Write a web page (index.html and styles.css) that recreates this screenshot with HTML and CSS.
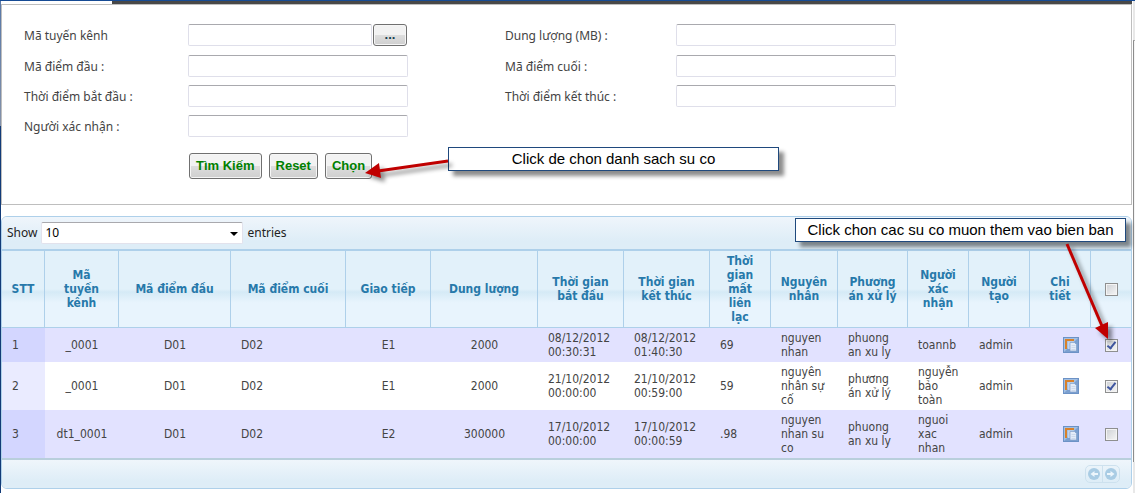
FILE: index.html
```html
<!DOCTYPE html>
<html lang="vi">
<head>
<meta charset="utf-8">
<title>Danh sách sự cố</title>
<link rel="stylesheet" href="styles.css">
</head>
<body>
<svg class="defs" aria-hidden="true">
  <symbol id="copy" viewBox="0 0 16 16">
    <rect x=".5" y=".5" width="15" height="15" fill="#7ba0d0" stroke="#6c92c6"/>
    <path d="M1 1h14L1 15z" fill="#a3c0e3"/>
    <path d="M3 12V3h8" fill="none" stroke="#d8812a" stroke-width="2"/>
    <path d="M5 4.500h5.500V12H5z" fill="#c3d5ec"/>
    <path d="M7 5.500h4.500l2 2V14H7z" fill="#e3ecf8" stroke="#7f9fca" stroke-width=".7"/>
    <path d="M8.500 8.500h4M8.500 10.500h4M8.500 12.500h4" stroke="#bccde4" stroke-width=".6"/>
  </symbol>
</svg>
<div class="window">
  <main class="content">
    <div class="tabbar"></div>
    <form class="panel">
      <div class="fields">
        <label for="route">Mã tuyến kênh</label>
        <div class="picker"><input class="box" id="route" type="text"><button class="btn more" type="button">...</button></div>
        <label for="size">Dung lượng (MB) :</label>
        <input class="box" id="size" type="text">
        <label for="first">Mã điểm đầu :</label>
        <input class="box" id="first" type="text">
        <label for="last">Mã điểm cuối :</label>
        <input class="box" id="last" type="text">
        <label for="start">Thời điểm bắt đầu :</label>
        <input class="box" id="start" type="text">
        <label for="end">Thời điểm kết thúc :</label>
        <input class="box" id="end" type="text">
        <label for="person">Người xác nhận :</label>
        <input class="box" id="person" type="text">
      </div>
      <div class="actions">
        <button class="btn" type="button">Tìm Kiếm</button>
        <button class="btn" type="button">Reset</button>
        <button class="btn" type="button">Chọn</button>
      </div>
    </form>

    <section class="grid">
      <div class="toolbar">
        <label for="count">Show</label>
        <span class="drop"><select id="count"><option>10</option><option>25</option></select></span>
        <span>entries</span>
      </div>
      <table>
        <colgroup>
          <col class="w43"><col class="w74"><col class="w112"><col class="w115"><col class="w85"><col class="w107"><col class="w86"><col class="w86"><col class="w61"><col class="w67"><col class="w70"><col class="w61"><col class="w61"><col class="w61"><col class="w41">
        </colgroup>
        <thead>
          <tr><th>STT</th><th>Mã<br>tuyến<br>kênh</th><th>Mã điểm đầu</th><th>Mã điểm cuối</th><th>Giao tiếp</th><th>Dung lượng</th><th>Thời gian<br>bắt đầu</th><th>Thời gian<br>kết thúc</th><th>Thời<br>gian<br>mất<br>liên<br>lạc</th><th>Nguyên<br>nhân</th><th>Phương<br>án xử lý</th><th>Người<br>xác<br>nhận</th><th>Người<br>tạo</th><th>Chi<br>tiết</th><th><input type="checkbox" aria-label="Chọn tất cả"></th></tr>
        </thead>
        <tbody>
          <tr><td>1</td><td class="mid">_0001</td><td class="mid">D01</td><td>D02</td><td class="mid">E1</td><td class="mid">2000</td><td>08/12/2012<br>00:30:31</td><td>08/12/2012<br>01:40:30</td><td>69</td><td>nguyen<br>nhan</td><td>phuong<br>an xu ly</td><td>toannb</td><td>admin</td><td class="detail"><button type="button" aria-label="Chi tiết"><svg><use href="#copy"/></svg></button></td><td class="tick"><input type="checkbox" aria-label="Chọn dòng 1" checked></td></tr>
          <tr><td>2</td><td class="mid">_0001</td><td class="mid">D01</td><td>D02</td><td class="mid">E1</td><td class="mid">2000</td><td>21/10/2012<br>00:00:00</td><td>21/10/2012<br>00:59:00</td><td>59</td><td>nguyên<br>nhân sự<br>cố</td><td>phương<br>án xử lý</td><td>nguyễn<br>bảo<br>toàn</td><td>admin</td><td class="detail"><button type="button" aria-label="Chi tiết"><svg><use href="#copy"/></svg></button></td><td class="tick"><input type="checkbox" aria-label="Chọn dòng 2" checked></td></tr>
          <tr><td>3</td><td class="mid">dt1_0001</td><td class="mid">D01</td><td>D02</td><td class="mid">E2</td><td class="mid">300000</td><td>17/10/2012<br>00:00:00</td><td>17/10/2012<br>00:00:59</td><td>.98</td><td>nguyen<br>nhan su<br>co</td><td>phuong<br>an xu ly</td><td>nguoi<br>xac<br>nhan</td><td>admin</td><td class="detail"><button type="button" aria-label="Chi tiết"><svg><use href="#copy"/></svg></button></td><td class="tick"><input type="checkbox" aria-label="Chọn dòng 3"></td></tr>
        </tbody>
      </table>
      <div class="footer">
        <div class="pager">
          <button type="button" aria-label="Trang trước"><svg viewBox="0 0 16 16"><circle cx="8" cy="8" r="6" fill="#a9cce4"/><path d="M12 7v2H8.500v2L4.500 8l4-3v2z" fill="#edf6fc"/></svg></button>
          <button type="button" aria-label="Trang sau"><svg viewBox="0 0 16 16"><circle cx="8" cy="8" r="6" fill="#a9cce4"/><path d="M4 7v2h3.500v2l4-3-4-3v2z" fill="#edf6fc"/></svg></button>
        </div>
      </div>
    </section>
  </main>
  <div class="scroll"><div class="thumb"></div></div>
</div>
<div class="note note-search">Click de chon danh sach su co</div>
<div class="note note-rows">Click chon cac su co muon them vao bien ban</div>
<svg class="arrows" width="1135" height="493" aria-hidden="true">
  <g class="arrow"><path d="M448 161L378 171" stroke="#c00000" stroke-width="3"/><path d="M365 173L379 163L381 178z" fill="#c00000"/></g>
  <g class="arrow"><path d="M1067 244L1102 326" stroke="#c00000" stroke-width="3"/><path d="M1108 339L1095 328L1108 322z" fill="#c00000"/></g>
</svg>
</body>
</html>
```

FILE: styles.css
```css
* { box-sizing: border-box; }
body {
  margin: 0;
  position: relative;
  background: #fff;
  color: #444;
  font: 12px/14px "Noto Sans", "DejaVu Sans", sans-serif;
}
.defs { position: absolute; width: 0; height: 0; }
.window {
  display: flex;
  min-height: 100vh;
  border-top: 1px solid #164b94;
  background: linear-gradient(#5878a8, #8492aa 125px, #123b78 125px) left / 1px 100% no-repeat;
  padding-left: 1px;
}
.content { flex: 1; min-width: 0; padding-right: 1px; }
.tabbar { height: 3px; margin-left: 111px; background: #484848; }
.panel {
  border: 1px solid #bebebe;
  padding: 19px 22px 25px;
}
.fields {
  display: grid;
  grid-template-columns: 164px 317px 171px 220px;
  grid-template-rows: 23px;
  row-gap: 8px;
}
.fields label { padding-top: 5px; }
.box {
  width: 220px;
  height: 22px;
  padding: 2px 4px;
  border: 1px solid #dfdfea;
  border-top-color: #a9a9ae;
  border-radius: 2px;
  background: #fff;
  font: inherit;
}
.picker { display: flex; gap: 1px; }
.picker .box { width: 184px; }
.btn {
  height: 26px;
  padding: 0 6px;
  border: 1px solid #707070;
  border-radius: 3px;
  box-shadow: inset 0 0 0 1px #f6f6f6;
  background: linear-gradient(#f2f2f2 0 48%, #dedede 48%, #cfcfcf);
  color: #008000;
  font: bold 13px/18px "Liberation Sans", Arial, sans-serif;
}
.more { width: 34px; height: 22px; color: #164050; }
.actions { display: flex; gap: 7px; margin: 16px 0 0 165px; }
.grid {
  margin-top: 11px;
  border: 1px solid #aed0ea;
  border-radius: 6px;
  overflow: hidden;
}
.toolbar {
  display: flex;
  align-items: center;
  gap: 4px;
  height: 34px;
  padding: 0 5px;
  border-bottom: 2px solid #aed0ea;
  background: linear-gradient(#eff5fb, #deedf7 75%);
  color: #222;
}
.drop { position: relative; width: 202px; }
.drop::after {
  content: "";
  position: absolute;
  right: 5px;
  top: 10px;
  border: 4px solid transparent;
  border-top-color: #000;
  border-bottom: 0;
}
.drop select {
  display: block;
  width: 100%;
  height: 22px;
  padding: 0 3px;
  appearance: none;
  border: 1px solid #e2e2ec;
  border-top-color: #a9a9ae;
  border-radius: 2px;
  background: #fff;
  color: #000;
  font: inherit;
}
table {
  width: 100%;
  table-layout: fixed;
  border-collapse: separate;
  border-spacing: 0;
  font-family: "DejaVu Sans Condensed", "DejaVu Sans", sans-serif;
}
.w41 { width: 41px; } .w43 { width: 43px; } .w61 { width: 61px; }
.w67 { width: 67px; } .w70 { width: 70px; } .w74 { width: 74px; }
.w85 { width: 85px; } .w86 { width: 86px; } .w107 { width: 107px; }
.w112 { width: 112px; } .w115 { width: 115px; }
th {
  padding: 3px 0;
  border-right: 1px solid #aed0ea;
  border-bottom: 1px solid #aed0ea;
  background: linear-gradient(#e2f1fa 0 50%, #d5eaf6 54%, #e8f4fd 68%);
  color: #2779aa;
  font-weight: bold;
  white-space: nowrap;
}
th:last-child { border-right: 0; }
td { padding: 3px 0 3px 10px; white-space: nowrap; }
tbody tr { background: #e2e2ff; }
tbody tr:nth-child(even) { background: #fff; }
td:first-child { background: #d3d6ff; }
tr:nth-child(even) td:first-child { background: #eaebff; }
.mid { padding: 3px 0; text-align: center; }
.tick { padding: 3px 0; text-align: center; }
.detail { padding: 3px 0 3px 33px; }
td button, .pager button { display: block; padding: 0; border: 0; background: none; }
td button { width: 16px; height: 16px; }
svg { display: block; width: 16px; height: 16px; }
input[type="checkbox"] {
  display: block;
  position: relative;
  width: 13px;
  height: 13px;
  margin: 0 auto;
  appearance: none;
  border: 1px solid #8e8f8f;
  background: linear-gradient(135deg, #cdd0d4, #f6f6f6);
  box-shadow: inset 0 0 0 1px #f4f4f4;
}
input[type="checkbox"]:checked::after {
  content: "";
  position: absolute;
  box-sizing: border-box;
  left: 3px;
  top: 0;
  width: 5px;
  height: 9px;
  border: solid #3f56a0;
  border-width: 0 2px 2px 0;
  transform: rotate(38deg);
}
.footer {
  display: flex;
  justify-content: flex-end;
  height: 30px;
  padding: 5px 11px;
  border-top: 2px solid #b9cfdc;
  background: linear-gradient(#eff6fb, #deedf7 75%);
}
.pager {
  display: flex;
  height: 18px;
  border: 1px solid #cde1ee;
  border-radius: 5px;
}
.pager button + button { border-left: 1px solid #cde1ee; }
.scroll { width: 2px; background: #e8e8e8; padding-top: 39px; }
.thumb { height: 422px; border-left: 1px solid #8c8c8c; border-top: 1px solid #aaa; background: #f4f4f4; }
.note {
  position: absolute;
  width: 331px;
  height: 24px;
  border: 1px solid #1f497d;
  background: #fff;
  box-shadow: 5px 5px 4px rgba(0, 0, 0, .45);
  color: #000;
  font: 15px/21px "Liberation Sans", Arial, sans-serif;
  text-align: center;
  white-space: nowrap;
}
.note-search { left: 448px; top: 147px; }
.note-rows { left: 795px; top: 218px; }
.arrows { position: absolute; left: 0; top: 0; width: 1135px; height: 493px; pointer-events: none; }
.arrow { filter: drop-shadow(4px 4px 2px rgba(0, 0, 0, .45)); }
```
